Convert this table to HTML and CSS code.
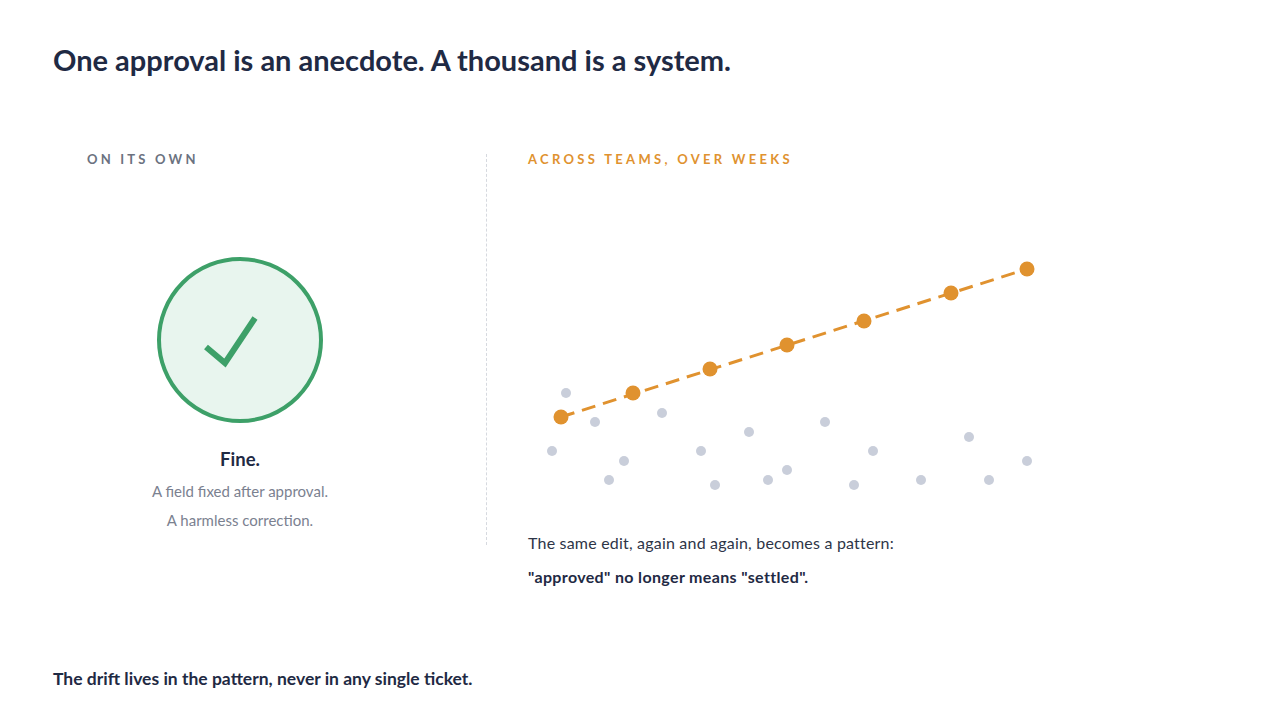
FILE: index.html
```html
<!DOCTYPE html>
<html lang="en">
<head>
<meta charset="utf-8">
<title>Approval drift</title>
<link rel="stylesheet" href="styles.css">
</head>
<body>
<div class="slide">
  <h1 class="title">One approval is an anecdote. A thousand is a system.</h1>
  <div class="main">
    <section class="col-left">
      <div class="label label-gray">ON ITS OWN</div>
      <div class="solo">
        <svg class="check" width="170" height="170" viewBox="155 255 170 170">
          <circle cx="240" cy="340" r="81" fill="#e8f5ee" stroke="#3da068" stroke-width="4"/>
          <polyline points="206,347 225,363 255,318" fill="none" stroke="#3da068" stroke-width="6" stroke-linejoin="miter"/>
        </svg>
        <div class="fine">Fine.</div>
        <div class="sub">A field fixed after approval.</div>
        <div class="sub">A harmless correction.</div>
      </div>
    </section>
    <div class="divider"></div>
    <section class="col-right">
      <div class="label label-orange">ACROSS TEAMS, OVER WEEKS</div>
      <svg class="chart" width="540" height="260" viewBox="528 240 540 260">
        <g fill="#c9ceda">
          <circle cx="566" cy="393" r="5"/>
          <circle cx="552" cy="451" r="5"/>
          <circle cx="595" cy="422" r="5"/>
          <circle cx="609" cy="480" r="5"/>
          <circle cx="624" cy="461" r="5"/>
          <circle cx="662" cy="413" r="5"/>
          <circle cx="701" cy="451" r="5"/>
          <circle cx="715" cy="485" r="5"/>
          <circle cx="749" cy="432" r="5"/>
          <circle cx="768" cy="480" r="5"/>
          <circle cx="787" cy="470" r="5"/>
          <circle cx="825" cy="422" r="5"/>
          <circle cx="854" cy="485" r="5"/>
          <circle cx="873" cy="451" r="5"/>
          <circle cx="921" cy="480" r="5"/>
          <circle cx="969" cy="437" r="5"/>
          <circle cx="989" cy="480" r="5"/>
          <circle cx="1027" cy="461" r="5"/>
        </g>
        <line x1="561" y1="417" x2="1027" y2="269" stroke="#e0922f" stroke-width="3" stroke-dasharray="14 8"/>
        <g fill="#e0922f">
          <circle cx="561" cy="417" r="7.5"/>
          <circle cx="633" cy="393" r="7.5"/>
          <circle cx="710" cy="369" r="7.5"/>
          <circle cx="787" cy="345" r="7.5"/>
          <circle cx="864" cy="321" r="7.5"/>
          <circle cx="951" cy="293" r="7.5"/>
          <circle cx="1027" cy="269" r="7.5"/>
        </g>
      </svg>
      <p class="caption caption-first">The same edit, again and again, becomes a pattern:</p>
      <p class="caption caption-bold">"approved" no longer means "settled".</p>
    </section>
  </div>
  <p class="footer">The drift lives in the pattern, never in any single ticket.</p>
</div>
</body>
</html>
```
FILE: styles.css
```css
html, body {
  margin: 0;
  padding: 0;
  background: #ffffff;
}
body {
  font-family: Lato, "Open Sans", "Liberation Sans", sans-serif;
  color: #1f2a44;
}
.slide {
  width: 1280px;
  height: 720px;
  box-sizing: border-box;
  padding: 43px 53px 31px 53px;
  display: flex;
  flex-direction: column;
}
.title {
  margin: 0;
  font-size: 29px;
  line-height: 34px;
  font-weight: 700;
  color: #1f2a44;
}
.main {
  display: flex;
  align-items: flex-start;
  margin-top: 74px;
}
.col-left {
  width: 433px;
  box-sizing: border-box;
  padding-left: 34px;
  display: flex;
  flex-direction: column;
}
.solo {
  width: 306px;
  display: flex;
  flex-direction: column;
  align-items: center;
}
.label {
  font-size: 13px;
  line-height: 16px;
  font-weight: 700;
  letter-spacing: 3.2px;
  white-space: nowrap;
}
.label-gray { color: #6b7280; }
.label-orange { color: #e0922f; letter-spacing: 3.3px; }
.check {
  display: block;
  margin-top: 88px;
}
.fine {
  margin-top: 22px;
  font-size: 18.5px;
  line-height: 24px;
  font-weight: 700;
  color: #1f2a44;
}
.sub {
  font-size: 15px;
  line-height: 29px;
  color: #7b8190;
}
.fine + .sub { margin-top: 6px; }
.divider {
  width: 0;
  height: 391px;
  margin-top: 3px;
  border-left: 1px dashed #d6d9df;
}
.col-right {
  padding-left: 41px;
  display: flex;
  flex-direction: column;
}
.chart {
  display: block;
  margin-top: 73px;
}
.caption {
  margin: 0;
  font-size: 16px;
  line-height: 34px;
  letter-spacing: 0.2px;
  color: #2d3547;
  white-space: nowrap;
}
.caption-first { margin-top: 26px; }
.caption-bold {
  font-weight: 700;
  letter-spacing: 0.35px;
  color: #1f2a44;
}
.footer {
  margin: auto 0 0 0;
  font-size: 17.5px;
  line-height: 20px;
  font-weight: 700;
  color: #1f2a44;
}
```
